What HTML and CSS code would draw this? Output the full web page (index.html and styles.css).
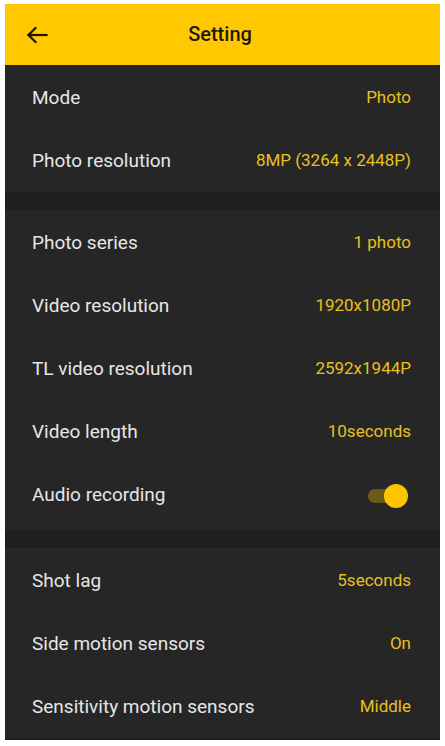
FILE: index.html
```html
<!DOCTYPE html>
<html lang="en">
<head>
<meta charset="utf-8">
<title>Setting</title>
<link rel="stylesheet" href="styles.css">
</head>
<body>
<div class="app">
  <header class="topbar">
    <span class="back">
      <svg width="22" height="18" viewBox="0 0 22 18" fill="none" stroke="#1a1608" stroke-width="2.2" stroke-linecap="square">
        <path d="M2.5 9H20.5"/>
        <path d="M9.5 2L2.5 9L9.5 16"/>
      </svg>
    </span>
    <h1 class="title">Setting</h1>
  </header>
  <main class="list">
    <section class="group">
      <div class="row"><span class="label">Mode</span><span class="value">Photo</span></div>
      <div class="row"><span class="label">Photo resolution</span><span class="value">8MP (3264 x 2448P)</span></div>
    </section>
    <section class="group group-tall">
      <div class="row"><span class="label">Photo series</span><span class="value">1 photo</span></div>
      <div class="row"><span class="label">Video resolution</span><span class="value">1920x1080P</span></div>
      <div class="row"><span class="label">TL video resolution</span><span class="value">2592x1944P</span></div>
      <div class="row"><span class="label">Video length</span><span class="value">10seconds</span></div>
      <div class="row"><span class="label">Audio recording</span><span class="toggle"><span class="track"></span><span class="knob"></span></span></div>
    </section>
    <section class="group">
      <div class="row"><span class="label">Shot lag</span><span class="value">5seconds</span></div>
      <div class="row"><span class="label">Side motion sensors</span><span class="value">On</span></div>
      <div class="row"><span class="label">Sensitivity motion sensors</span><span class="value">Middle</span></div>
    </section>
  </main>
</div>
</body>
</html>
```

FILE: styles.css
```css
* { box-sizing: border-box; }
html, body { margin: 0; padding: 0; background: #ffffff; }
body {
  font-family: Roboto, "Liberation Sans", Arial, sans-serif;
  width: 445px;
  height: 746px;
  overflow: hidden;
}
.app {
  margin: 4px 5px 0 5px;
  width: 435px;
  height: 736px;
  background: #1f1f1f;
  display: flex;
  flex-direction: column;
  overflow: hidden;
}
.topbar {
  height: 61px;
  flex: 0 0 61px;
  background: #ffc800;
  display: flex;
  align-items: center;
  position: relative;
}
.back {
  display: flex;
  margin-left: 21px;
  margin-top: 1px;
}
.title {
  position: absolute;
  left: 0;
  right: 5px;
  top: 0;
  bottom: 0;
  margin: 0;
  display: flex;
  align-items: center;
  justify-content: center;
  font-size: 20px;
  font-weight: 500;
  color: #1d1a0c;
  padding-bottom: 2px;
}
.list {
  display: flex;
  flex-direction: column;
  gap: 18px;
}
.group {
  background: #262626;
  display: flex;
  flex-direction: column;
  padding-top: 1px;
}
.group-tall {
  padding-bottom: 4px;
}
.row {
  height: 63px;
  display: flex;
  align-items: center;
  justify-content: space-between;
  padding: 0 29px 0 27px;
}
.label {
  font-size: 19px;
  color: #e6e6e6;
  padding-bottom: 1px;
}
.value {
  font-size: 17px;
  color: #e8c020;
  padding-bottom: 1px;
}
.toggle {
  position: relative;
  width: 40px;
  height: 24px;
  margin-right: 3px;
  margin-top: 3px;
}
.track {
  position: absolute;
  left: 0;
  top: 5px;
  width: 34px;
  height: 14px;
  border-radius: 7px;
  background: #6b5a1c;
}
.knob {
  position: absolute;
  right: 0;
  top: 0;
  width: 24px;
  height: 24px;
  border-radius: 50%;
  background: #ffc400;
}
```
